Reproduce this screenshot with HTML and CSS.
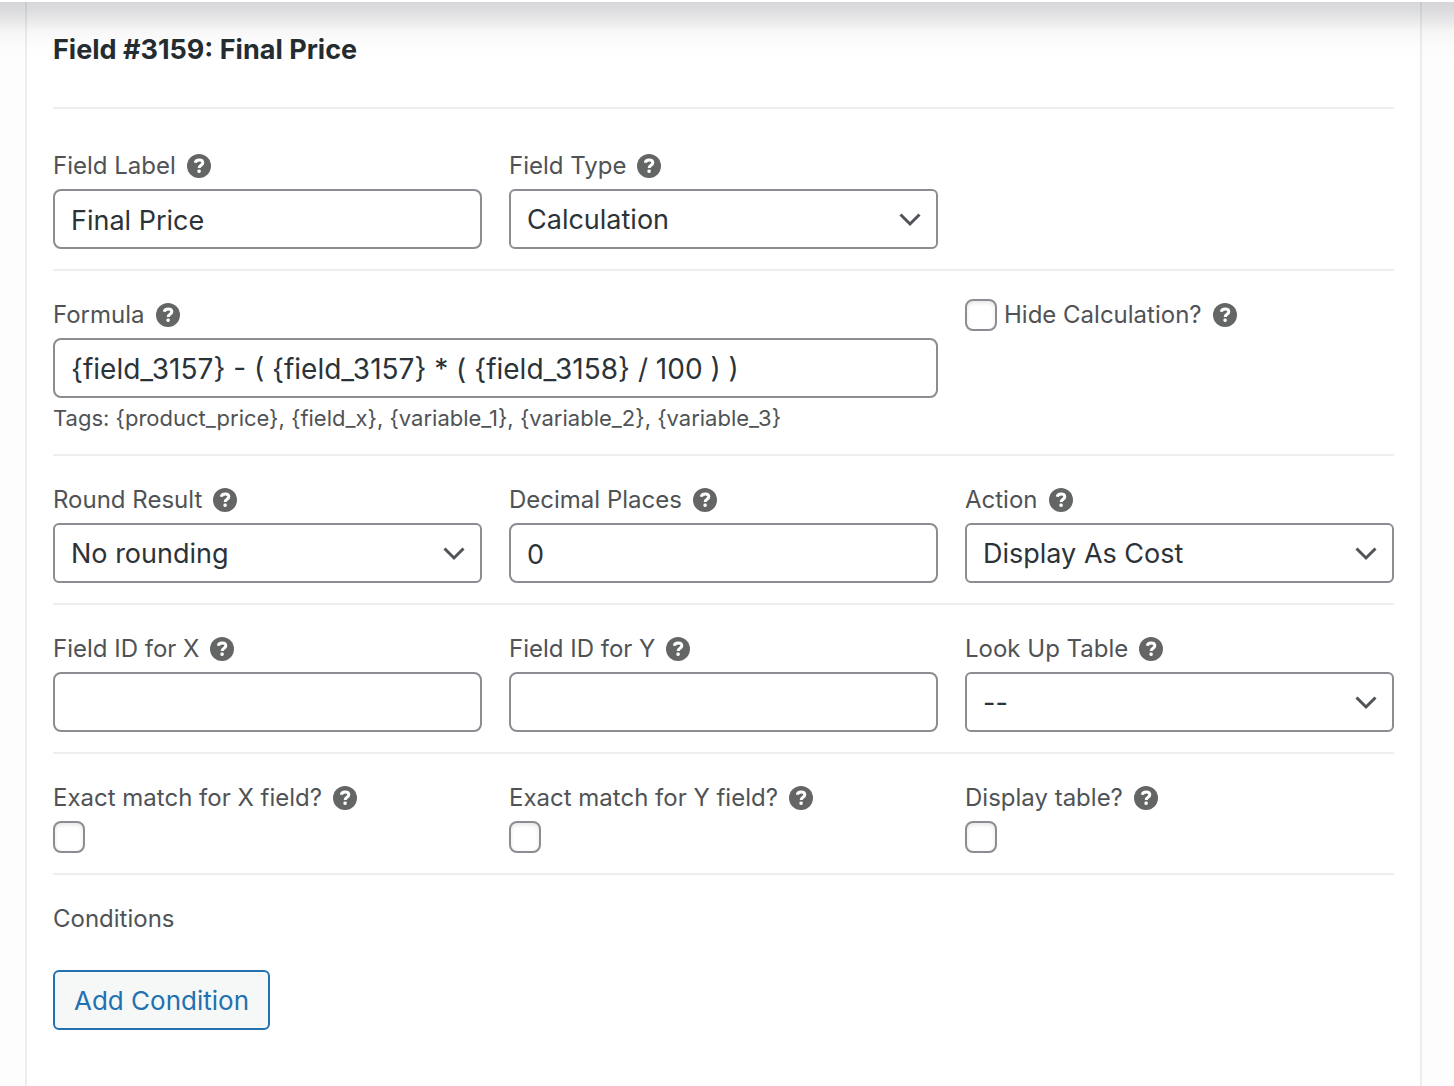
FILE: index.html
```html
<!DOCTYPE html>
<html lang="en">
<head>
<meta charset="utf-8">
<meta name="viewport" content="width=device-width, initial-scale=1">
<title>Field #3159: Final Price</title>
<link rel="stylesheet" href="styles.css">
</head>
<body>
<svg class="sprite" aria-hidden="true">
  <symbol id="help" viewBox="0 0 24 24">
    <circle cx="12" cy="12" r="12" fill="currentColor"/>
    <path d="M8.300 8.800C8.600 6.700 10.200 5.900 12.200 5.900c2.200 0 3.600 1.100 3.600 2.900 0 2.700-3.600 2.400-3.600 5.300" fill="none" stroke="#fff" stroke-width="3"/>
    <rect x="10.400" y="15.600" width="3.400" height="3.400" rx="1.400" fill="#fff"/>
  </symbol>
  <symbol id="chevron" viewBox="0 0 24 24">
    <path d="M2.500 7.500 12 17l9.500-9.500" fill="none" stroke="currentColor" stroke-width="3"/>
  </symbol>
</svg>
<main class="panel">
  <h1 class="title">Field #3159: Final Price</h1>
  <form class="form">
    <section class="row row-first">
      <div class="field">
        <div class="label"><label for="field-label">Field Label</label><svg class="help"><use href="#help"/></svg></div>
        <input class="control" id="field-label" type="text" value="Final Price">
      </div>
      <div class="field">
        <div class="label"><label for="field-type">Field Type</label><svg class="help"><use href="#help"/></svg></div>
        <div class="select"><select class="control" id="field-type"><option>Calculation</option></select><svg class="chevron"><use href="#chevron"/></svg></div>
      </div>
    </section>
    <section class="row">
      <div class="field wide">
        <div class="label"><label for="formula">Formula</label><svg class="help"><use href="#help"/></svg></div>
        <input class="control formula" id="formula" type="text" value="{field_3157} - ( {field_3157} * ( {field_3158} / 100 ) )">
        <p class="hint">Tags: {product_price}, {field_x}, {variable_1}, {variable_2}, {variable_3}</p>
      </div>
      <div class="field">
        <div class="label"><input class="check inline" id="hide" type="checkbox"><label for="hide">Hide Calculation?</label><svg class="help"><use href="#help"/></svg></div>
      </div>
    </section>
    <section class="row">
      <div class="field">
        <div class="label"><label for="round">Round Result</label><svg class="help"><use href="#help"/></svg></div>
        <div class="select"><select class="control" id="round"><option>No rounding</option></select><svg class="chevron"><use href="#chevron"/></svg></div>
      </div>
      <div class="field">
        <div class="label"><label for="decimals">Decimal Places</label><svg class="help"><use href="#help"/></svg></div>
        <input class="control" id="decimals" type="text" inputmode="numeric" value="0">
      </div>
      <div class="field">
        <div class="label"><label for="action">Action</label><svg class="help"><use href="#help"/></svg></div>
        <div class="select"><select class="control" id="action"><option>Display As Cost</option></select><svg class="chevron"><use href="#chevron"/></svg></div>
      </div>
    </section>
    <section class="row">
      <div class="field">
        <div class="label"><label for="id-x">Field ID for X</label><svg class="help"><use href="#help"/></svg></div>
        <input class="control" id="id-x" type="text">
      </div>
      <div class="field">
        <div class="label"><label for="id-y">Field ID for Y</label><svg class="help"><use href="#help"/></svg></div>
        <input class="control" id="id-y" type="text">
      </div>
      <div class="field">
        <div class="label"><label for="lookup">Look Up Table</label><svg class="help"><use href="#help"/></svg></div>
        <div class="select"><select class="control" id="lookup"><option>--</option></select><svg class="chevron"><use href="#chevron"/></svg></div>
      </div>
    </section>
    <section class="row">
      <div class="field">
        <div class="label"><label for="exact-x">Exact match for X field?</label><svg class="help"><use href="#help"/></svg></div>
        <input class="check" id="exact-x" type="checkbox">
      </div>
      <div class="field">
        <div class="label"><label for="exact-y">Exact match for Y field?</label><svg class="help"><use href="#help"/></svg></div>
        <input class="check" id="exact-y" type="checkbox">
      </div>
      <div class="field">
        <div class="label"><label for="display">Display table?</label><svg class="help"><use href="#help"/></svg></div>
        <input class="check" id="display" type="checkbox">
      </div>
    </section>
    <section class="conditions">
      <h2 class="subtitle">Conditions</h2>
      <button class="button" type="button">Add Condition</button>
    </section>
  </form>
</main>
</body>
</html>
```
FILE: styles.css
```css
*, *::before, *::after {
  box-sizing: border-box;
}

body {
  margin: 0;
  min-height: 100vh;
  padding: 2px 32px 0 25px;
  display: flex;
  background: #fdfdfd;
  color: #505355;
  font: 24px/36px Inter, "Liberation Sans", sans-serif;
}

/* Shadow cast by the bar above the panel */
body::before {
  content: "";
  position: absolute;
  inset: 0 0 auto;
  height: 60px;
  pointer-events: none;
  background: linear-gradient(#fff 2px, rgba(40, 44, 52, .19) 2px, rgba(40, 44, 52, .16) 10px, rgba(40, 44, 52, .11) 20px, rgba(40, 50, 48, .04) 31px, rgba(40, 50, 48, .01) 44px, transparent);
}

.sprite {
  position: absolute;
  width: 0;
  height: 0;
}

.panel {
  flex: 1;
  min-width: 0;
  padding: 30px 26px 56px;
  background: #fff;
  border: solid #ededee;
  border-width: 0 2px;
}

.title {
  margin: 0;
  padding-bottom: 39px;
  color: #252c30;
  font-size: 27px;
  font-weight: 700;
  line-height: 36px;
}

.row {
  display: grid;
  grid-template-columns: repeat(3, minmax(0, 1fr));
  gap: 27px;
  padding: 26px 0 20px;
  border-top: 2px solid #eee;
}

.row-first {
  padding-top: 39px;
}

.wide {
  grid-column: span 2;
}

.label {
  display: flex;
  align-items: center;
  height: 36px;
  margin-bottom: 5px;
  white-space: nowrap;
}

.help {
  width: 24px;
  height: 24px;
  margin-left: 11px;
  color: #646665;
}

.control {
  display: block;
  width: 100%;
  height: 60px;
  margin: 0;
  padding: 2px 16px 0;
  border: 2px solid #8c8c92;
  border-radius: 8px;
  background: #fff;
  color: #2c3338;
  font: inherit;
  font-size: 27px;
  appearance: none;
}

.formula {
  font-size: 28px;
}

.select {
  display: grid;
  align-items: center;
}

.select .control,
.chevron {
  grid-area: 1 / 1;
}

.select .control {
  border-radius: 6px;
}

.chevron {
  justify-self: end;
  width: 24px;
  height: 24px;
  margin-right: 16px;
  color: #505357;
  pointer-events: none;
}

.hint {
  margin: 4px 0 0;
  font-size: 22px;
  line-height: 32px;
}

.check {
  display: block;
  flex: none;
  width: 32px;
  height: 32px;
  margin: 0;
  border: 2px solid #8c8c92;
  border-radius: 8px;
  background: #fff;
  box-shadow: inset 0 2px 4px rgba(0, 0, 0, .1);
  appearance: none;
}

.check.inline {
  margin-right: 7px;
}

.conditions {
  padding-top: 26px;
  border-top: 2px solid #eee;
}

.subtitle {
  margin: 0 0 33px;
  font-size: 24px;
  font-weight: 400;
}

.button {
  height: 60px;
  padding: 2px 19px 0;
  border: 2px solid #2271b1;
  border-radius: 6px;
  background: #f6f7f7;
  color: #2271b1;
  font: inherit;
  font-size: 26px;
}

@media (max-width: 800px) {
  .row {
    grid-template-columns: minmax(0, 1fr);
  }

  .wide {
    grid-column: auto;
  }
}
```
